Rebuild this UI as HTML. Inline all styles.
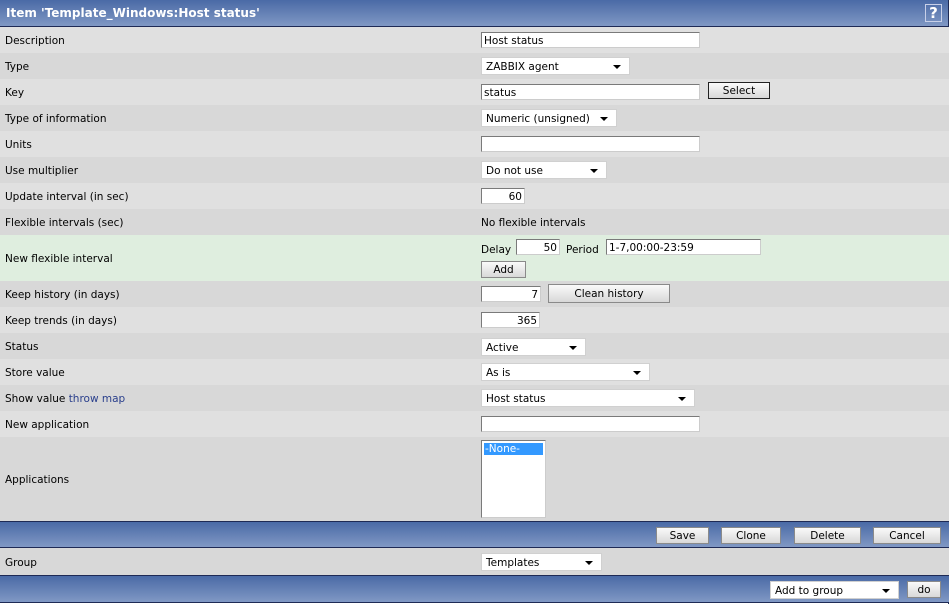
<!DOCTYPE html>
<html><head><meta charset="utf-8"><style>
*{box-sizing:border-box}
body{margin:0;width:951px;height:604px;background:#fff;font-family:"DejaVu Sans","Liberation Sans",sans-serif;font-size:10.5px;color:#000;position:relative;overflow:hidden}
.a{position:absolute}
.bar{position:absolute;left:0;width:949px;background:linear-gradient(#4a6aa6,#8098c4);border-bottom:1px solid #1e2a55;border-top:1px solid #1e2a55}
.row{position:absolute;left:0;width:949px}
.l{background:#e0e0e0}.d{background:#d8d8d8}
.lab{position:absolute;left:5px}
.in{position:absolute;background:#fff;border:1px solid #7a7a7a;border-right-color:#ccc;border-bottom-color:#ccc;height:16px;padding:1px 2px 0;line-height:14px;font-size:10.5px}
.r{text-align:right}
.sel{position:absolute;background:#fff;border:1px solid #d0d0d0;height:18px;padding-left:4px;line-height:18px}
.sel:after{content:"";position:absolute;right:8px;top:7px;border-left:4px solid transparent;border-right:4px solid transparent;border-top:4px solid #000}
.btn{position:absolute;background:linear-gradient(#fafafa,#d8d8d8);border:1px solid #8a8a8a;text-align:center;height:17px;line-height:16px}
</style></head><body>
<div class="bar" style="top:0;height:27px;border-top:none"></div>
<div class="a" style="left:6px;top:6px;color:#fff;font-weight:bold;font-size:12px">Item 'Template_Windows:Host status'</div>
<div class="a" style="left:925px;top:4px;width:17px;height:18px;border:1px solid #c8d0e8;color:#fff;font-weight:bold;font-size:15px;text-align:center;line-height:16px">?</div>
<div class="a" style="left:948px;top:0;width:3px;height:604px;background:#fff;border-left:1px solid #1e2a55"></div>

<div class="row l" style="top:27px;height:26px"><span class="lab" style="top:8px">Description</span></div>
<div class="row d" style="top:53px;height:26px"><span class="lab" style="top:8px">Type</span></div>
<div class="row l" style="top:79px;height:26px"><span class="lab" style="top:8px">Key</span></div>
<div class="row d" style="top:105px;height:26px"><span class="lab" style="top:8px">Type of information</span></div>
<div class="row l" style="top:131px;height:26px"><span class="lab" style="top:8px">Units</span></div>
<div class="row d" style="top:157px;height:26px"><span class="lab" style="top:8px">Use multiplier</span></div>
<div class="row l" style="top:183px;height:26px"><span class="lab" style="top:8px">Update interval (in sec)</span></div>
<div class="row d" style="top:209px;height:26px"><span class="lab" style="top:8px">Flexible intervals (sec)</span></div>
<div class="row" style="top:235px;height:46px;background:#dfeedf"><span class="lab" style="top:18px">New flexible interval</span></div>
<div class="row d" style="top:281px;height:26px"><span class="lab" style="top:8px">Keep history (in days)</span></div>
<div class="row l" style="top:307px;height:26px"><span class="lab" style="top:8px">Keep trends (in days)</span></div>
<div class="row d" style="top:333px;height:26px"><span class="lab" style="top:8px">Status</span></div>
<div class="row l" style="top:359px;height:26px"><span class="lab" style="top:8px">Store value</span></div>
<div class="row d" style="top:385px;height:26px"><span class="lab" style="top:8px">Show value <span style="color:#2a3f8c">throw map</span></span></div>
<div class="row l" style="top:411px;height:26px"><span class="lab" style="top:8px">New application</span></div>
<div class="row d" style="top:437px;height:84px"><span class="lab" style="top:37px">Applications</span></div>
<div class="bar" style="top:521px;height:27px"></div>
<div class="row d" style="top:548px;height:27px"><span class="lab" style="top:9px">Group</span></div>
<div class="bar" style="top:575px;height:28px"></div>

<div class="in" style="left:481px;top:32px;width:219px">Host status</div>
<div class="sel" style="left:481px;top:57px;width:149px">ZABBIX agent</div>
<div class="in" style="left:481px;top:84px;width:219px">status</div>
<div class="btn" style="left:708px;top:82px;width:62px;border-color:#222">Select</div>
<div class="sel" style="left:481px;top:109px;width:136px">Numeric (unsigned)</div>
<div class="in" style="left:481px;top:136px;width:219px"></div>
<div class="sel" style="left:481px;top:161px;width:126px">Do not use</div>
<div class="in r" style="left:481px;top:188px;width:44px">60</div>
<div class="a" style="left:481px;top:217px">No flexible intervals</div>
<div class="a" style="left:481px;top:244px">Delay</div>
<div class="in r" style="left:516px;top:239px;width:44px">50</div>
<div class="a" style="left:566px;top:244px">Period</div>
<div class="in" style="left:606px;top:239px;width:155px">1-7,00:00-23:59</div>
<div class="btn" style="left:481px;top:261px;width:45px">Add</div>
<div class="in r" style="left:481px;top:286px;width:60px">7</div>
<div class="btn" style="left:548px;top:284px;width:122px;height:19px;line-height:18px">Clean history</div>
<div class="in r" style="left:481px;top:312px;width:59px">365</div>
<div class="sel" style="left:481px;top:338px;width:105px">Active</div>
<div class="sel" style="left:481px;top:363px;width:169px">As is</div>
<div class="sel" style="left:481px;top:389px;width:214px">Host status</div>
<div class="in" style="left:481px;top:416px;width:219px"></div>
<div class="a" style="left:481px;top:440px;width:65px;height:78px;background:#fff;border:1px solid #7a7a7a;border-right-color:#ccc;border-bottom-color:#ccc;padding:2px"><div style="background:#3399ff;color:#fff;height:12px;line-height:13px;padding-left:1px">-None-</div></div>
<div class="btn" style="left:656px;top:527px;width:53px">Save</div>
<div class="btn" style="left:721px;top:527px;width:60px">Clone</div>
<div class="btn" style="left:794px;top:527px;width:67px">Delete</div>
<div class="btn" style="left:873px;top:527px;width:68px">Cancel</div>
<div class="sel" style="left:481px;top:553px;width:121px">Templates</div>
<div class="sel" style="left:770px;top:581px;width:129px">Add to group</div>
<div class="btn" style="left:907px;top:581px;width:34px">do</div>
</body></html>
